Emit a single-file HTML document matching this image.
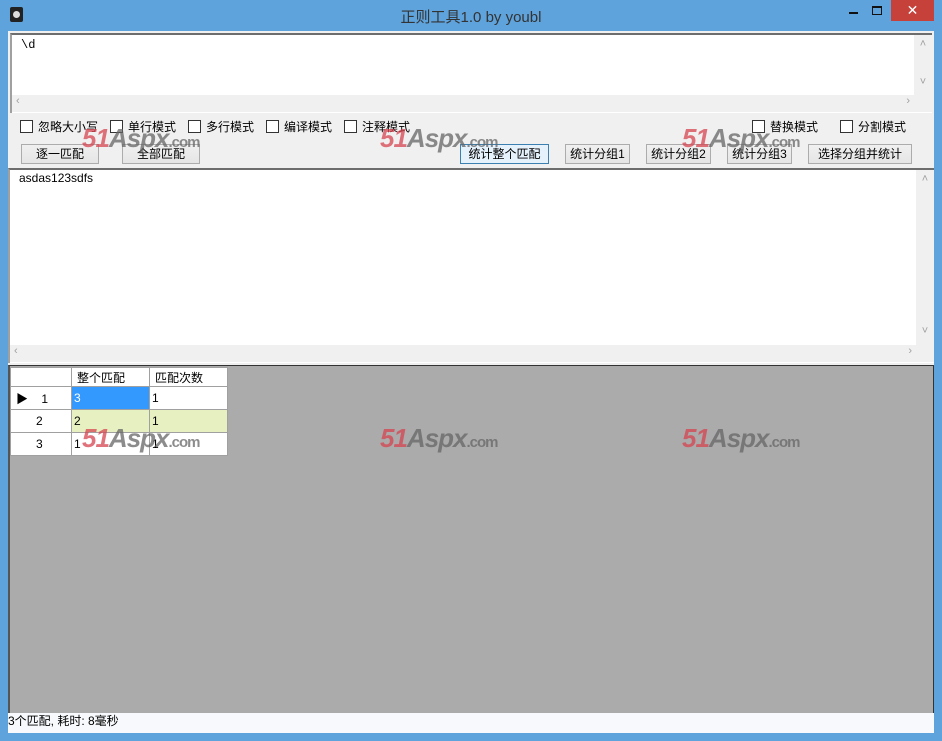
<!DOCTYPE html>
<html><head><meta charset="utf-8"><style>
*{margin:0;padding:0;box-sizing:border-box}
body{width:942px;height:741px;background:#5fa3dc;position:relative;overflow:hidden;font-family:"Liberation Sans","Noto Sans CJK SC",sans-serif;font-size:12px;color:#000}
.a{position:absolute}
.client{left:8px;top:31px;width:926px;height:702px;background:#f0f0f0}
.tb{background:#fff;border-top:2px solid #6d6d6d;border-left:2px solid #a0a0a0}
.btn{position:absolute;height:20px;background:linear-gradient(#f0f0f0,#e5e5e5);border:1px solid #acacac;text-align:center;line-height:18px;font-size:12px}
.cb{position:absolute;font-size:12px;line-height:14px}
.cb i{display:inline-block;width:13px;height:13px;border:1px solid #333;background:#fff;vertical-align:-2px;margin-right:5px}
.sb{background:#f0f0f0;color:#a0a0a0;font-size:11px}
.wm{position:absolute;font:italic bold 26px "Liberation Sans",sans-serif;color:#d64450;opacity:.75;letter-spacing:-1px}
.wm b{color:#666}.wm s{text-decoration:none;font-size:15px;color:#666;font-style:normal}
td{border:1px solid #a0a0a0;height:23px;font-size:12px;padding-left:2px}
</style></head><body>
<div class="a" style="left:10px;top:7px;width:13px;height:15px;background:#222;border-radius:2px"><div style="margin:4px 3px;width:7px;height:7px;border-radius:50%;background:#ddd"></div></div>
<div class="a" style="left:0;width:942px;top:6px;text-align:center;font-size:15px;color:#333">正则工具1.0 by youbl</div>
<div class="a" style="left:849px;top:12px;width:9px;height:2px;background:#111"></div>
<div class="a" style="left:872px;top:6px;width:10px;height:9px;border:1px solid #111;border-top-width:2px"></div>
<div class="a" style="left:891px;top:0;width:43px;height:21px;background:#c7413b;color:#fff;text-align:center;font-size:14px;line-height:21px">✕</div>
<div class="a client"></div>
<div class="a tb" style="left:10px;top:33px;width:922px;height:80px"></div>
<div class="a" style="left:21px;top:38px;font-family:'Liberation Mono',monospace;font-size:12px">\d</div>
<div class="a sb" style="left:914px;top:35px;width:18px;height:61px"><div style="text-align:center;margin-top:3px">˄</div><div style="text-align:center;margin-top:26px">˅</div></div>
<div class="a sb" style="left:12px;top:95px;width:920px;height:17px"><span style="margin-left:4px">‹</span><span style="position:absolute;right:22px">›</span></div>
<div class="cb" style="left:20px;top:120px"><i></i>忽略大小写</div>
<div class="cb" style="left:110px;top:120px"><i></i>单行模式</div>
<div class="cb" style="left:188px;top:120px"><i></i>多行模式</div>
<div class="cb" style="left:266px;top:120px"><i></i>编译模式</div>
<div class="cb" style="left:344px;top:120px"><i></i>注释模式</div>
<div class="cb" style="left:752px;top:120px"><i></i>替换模式</div>
<div class="cb" style="left:840px;top:120px"><i></i>分割模式</div>
<div class="btn" style="left:21px;top:144px;width:78px">逐一匹配</div>
<div class="btn" style="left:122px;top:144px;width:78px">全部匹配</div>
<div class="btn" style="left:460px;top:144px;width:89px;border-color:#3c7fb1;background:#e5f1fb">统计整个匹配</div>
<div class="btn" style="left:565px;top:144px;width:65px">统计分组1</div>
<div class="btn" style="left:646px;top:144px;width:65px">统计分组2</div>
<div class="btn" style="left:727px;top:144px;width:65px">统计分组3</div>
<div class="btn" style="left:808px;top:144px;width:104px">选择分组并统计</div>
<div class="a tb" style="left:8px;top:168px;width:926px;height:195px"></div>
<div class="a" style="left:19px;top:171px;font-size:12px">asdas123sdfs</div>
<div class="a sb" style="left:916px;top:170px;width:18px;height:175px"><div style="text-align:center;margin-top:3px">˄</div><div style="text-align:center;margin-top:140px">˅</div></div>
<div class="a sb" style="left:10px;top:345px;width:924px;height:17px"><span style="margin-left:4px">‹</span><span style="position:absolute;right:22px">›</span></div>
<div class="a" style="left:8px;top:365px;width:926px;height:349px;background:#ababab;border:1px solid #333;border-left:2px solid #555"></div>
<table class="a" style="left:10px;top:367px;border-collapse:collapse;background:#fff">
<tr style="height:19px"><td style="width:61px;height:19px"></td><td style="width:78px;height:19px;padding-left:5px">整个匹配</td><td style="width:78px;height:19px;padding-left:5px">匹配次数</td></tr>
<tr><td style="padding-left:5px">▶&nbsp;&nbsp;&nbsp;&nbsp;1</td><td style="background:#3399ff;color:#fff">3</td><td>1</td></tr>
<tr><td style="padding-left:25px">2</td><td style="background:#e6f0c0">2</td><td style="background:#e6f0c0">1</td></tr>
<tr><td style="padding-left:25px">3</td><td>1</td><td>1</td></tr>
</table>
<div class="a" style="left:8px;top:713px;width:926px;height:20px;background:#f7f9fc;font-size:12px;line-height:16px">3个匹配, 耗时: 8毫秒</div>
<div class="wm" style="left:82px;top:123px">51<b>Aspx</b><s>.com</s></div>
<div class="wm" style="left:380px;top:123px">51<b>Aspx</b><s>.com</s></div>
<div class="wm" style="left:682px;top:123px">51<b>Aspx</b><s>.com</s></div>
<div class="wm" style="left:82px;top:423px">51<b>Aspx</b><s>.com</s></div>
<div class="wm" style="left:380px;top:423px">51<b>Aspx</b><s>.com</s></div>
<div class="wm" style="left:682px;top:423px">51<b>Aspx</b><s>.com</s></div>
</body></html>
